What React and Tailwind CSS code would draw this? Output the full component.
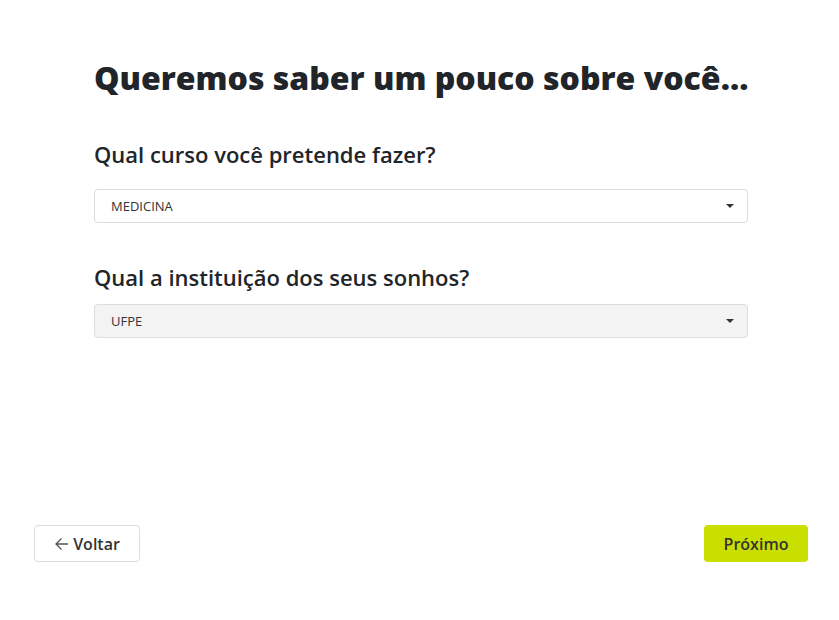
import React from "react";

function Caret() {
  return (
    <svg width="8" height="4" viewBox="0 0 8 4" className="fill-[#333]">
      <path d="M0 0 L8 0 L4 4 Z" />
    </svg>
  );
}

function Select({ value, disabled }) {
  return (
    <div
      className={`flex items-center justify-between h-[34px] w-full rounded-[4px] border border-[#dcdcdc] pl-[16px] pr-[13px] ${
        disabled ? "bg-[#f3f3f3]" : "bg-white"
      }`}
    >
      <span className="text-[13px] text-[#333] pt-[2px]">{value}</span>
      <Caret />
    </div>
  );
}

export default function App() {
  return (
    <div
      className="w-full h-[620px] bg-white flex flex-col text-[#212529]"
      style={{ fontFamily: '"Open Sans", sans-serif' }}
    >
      <div className="w-[654px] ml-[94px] pt-[54px]">
        <h1 className="text-[32px] font-extrabold leading-[48px] whitespace-nowrap">
          Queremos saber um pouco sobre você...
        </h1>
        <h2 className="mt-[36px] text-[22px] font-semibold leading-[32px]">
          Qual curso você pretende fazer?
        </h2>
        <div className="mt-[19px]">
          <Select value="MEDICINA" />
        </div>
        <h2 className="mt-[38px] text-[22px] font-semibold leading-[32px]">
          Qual a instituição dos seus sonhos?
        </h2>
        <div className="mt-[11px]">
          <Select value="UFPE" disabled />
        </div>
      </div>
      <div className="w-[774px] ml-[34px] mt-auto mb-[58px] flex justify-between">
        <button className="flex items-center gap-[3px] h-[37px] w-[106px] justify-center rounded-[4px] border border-[#dcdcdc] bg-white text-[16px] font-semibold text-[#333]">
          <svg width="16" height="16" viewBox="0 0 16 16" fill="none" stroke="#555" strokeWidth="1.3">
            <path d="M14 8 H2 M7.5 2.5 L2 8 L7.5 13.5" />
          </svg>
          Voltar
        </button>
        <button className="h-[37px] w-[104px] rounded-[4px] bg-[#c8df00] text-[16px] font-semibold text-[#333]">
          Próximo
        </button>
      </div>
    </div>
  );
}
